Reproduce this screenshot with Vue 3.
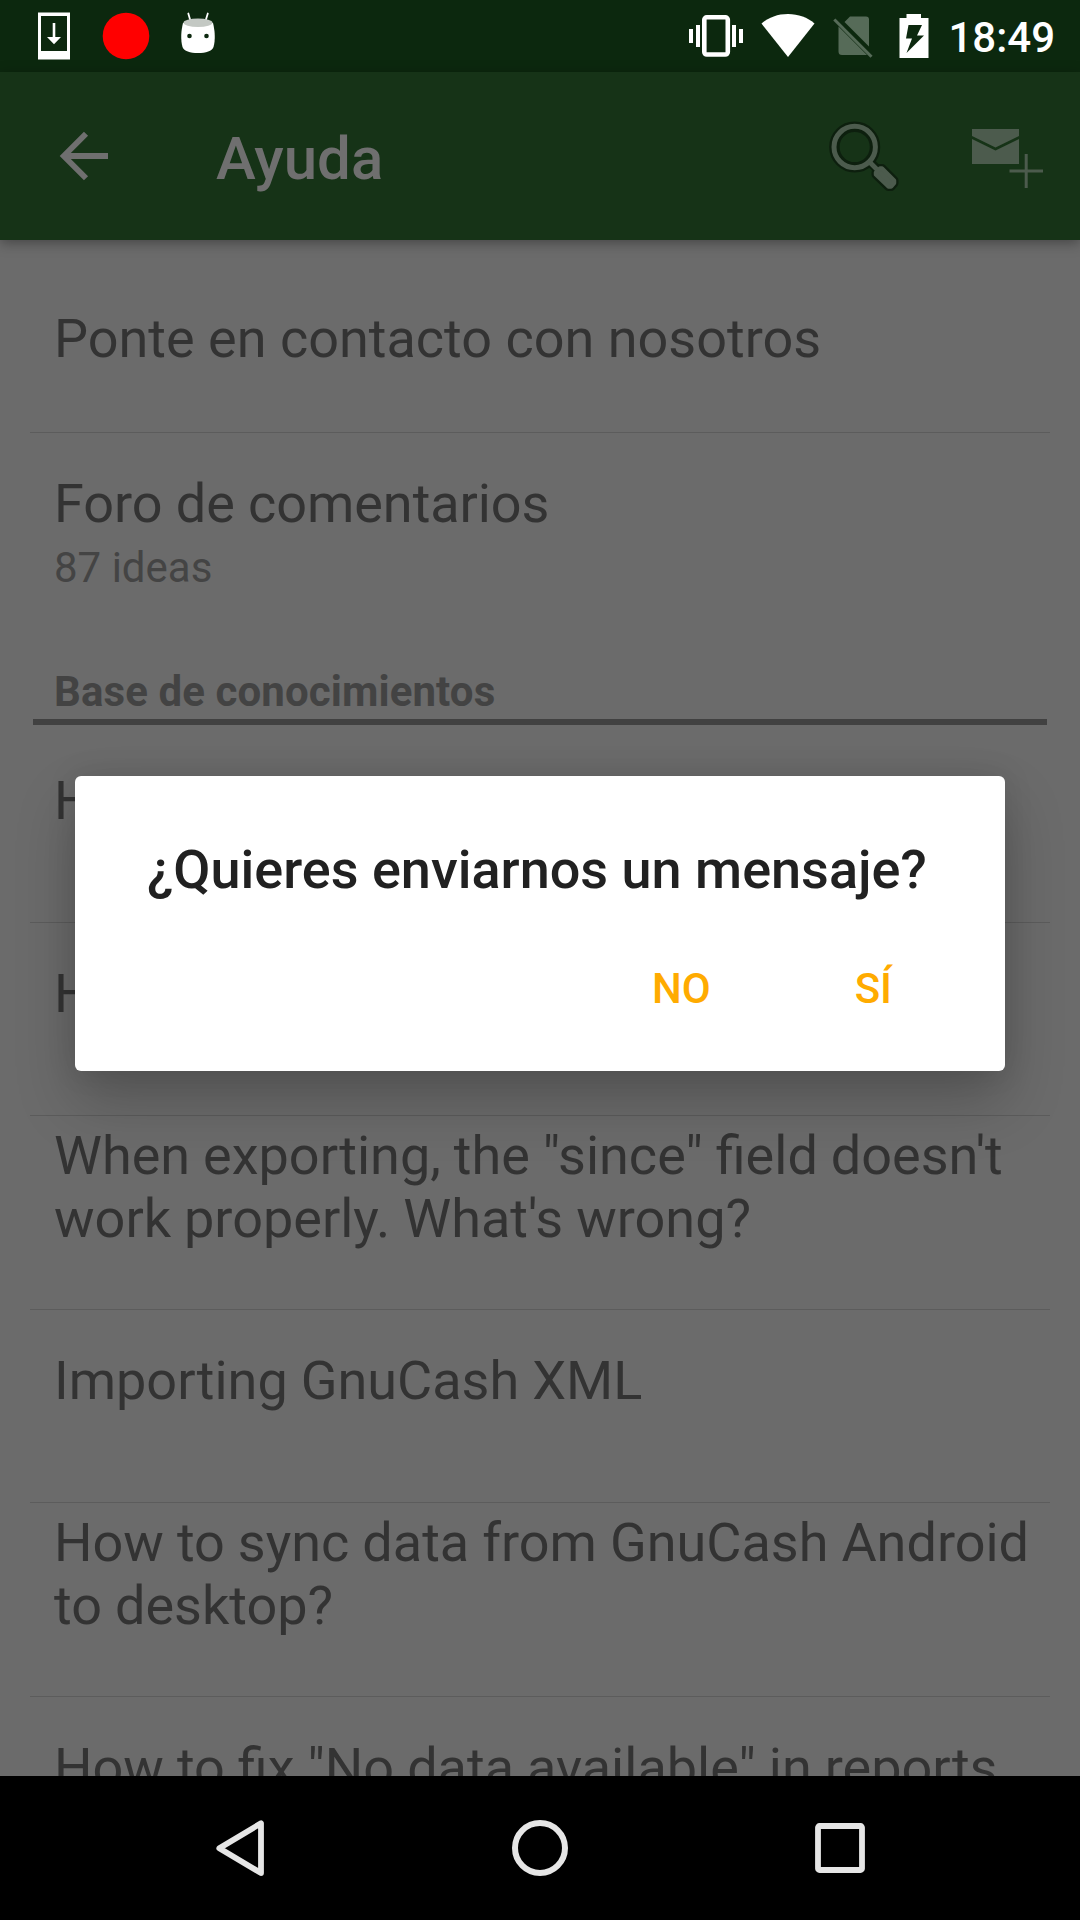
<script setup>
const articles = [
  { text: 'How do I use GnuCash?', height: 194 },
  { text: 'How do I create accounts?', height: 193 },
  { text: 'When exporting, the "since" field doesn\'t work properly. What\'s wrong?', height: 194 },
  { text: 'Importing GnuCash XML', height: 193 },
  { text: 'How to sync data from GnuCash Android to desktop?', height: 194 },
  { text: 'How to fix "No data available" in reports', height: 194 },
]
</script>

<template>
  <div class="screen">
    <div class="status">
      <svg class="s-download" width="34" height="48" viewBox="37 12 34 48">
        <path fill="#fff" fill-rule="evenodd" d="M38 12.5H70V59.5H38ZM41 16V51H67V16Z" />
        <path fill="#fff" d="M52.7 23H55.3V37H61L54 44.3L47 37H52.7Z" />
      </svg>
      <svg class="s-record" width="48" height="48" viewBox="102 12 48 48"><circle cx="126" cy="36" r="23.3" fill="#f00" /></svg>
      <svg class="s-robot" width="36" height="42" viewBox="180 12 36 42">
        <path d="M188.3 13.5L190.5 21M207.8 13.5L205.5 21" stroke="#fff" stroke-width="1.8" stroke-linecap="round" />
        <path d="M183 23C181 31 180.500 40 182.500 47C184 51 190 53 198 53C206 53 212 51 213.500 47C215.500 40 215 31 213 23Z" fill="#fff" />
        <ellipse cx="198" cy="22.700" rx="14.600" ry="4.200" fill="#c3c8c3" />
        <circle cx="189.500" cy="36" r="2.300" fill="#0c280e" /><circle cx="206.500" cy="36" r="2.300" fill="#0c280e" />
      </svg>
      <div class="status-right">
        <svg class="s-vibrate" width="56" height="44" viewBox="688 14 56 44">
          <rect x="704.3" y="17.300" width="23.500" height="37.200" rx="2.500" fill="none" stroke="#fff" stroke-width="4.600" />
          <path fill="#fff" d="M689 29H693V43H689ZM696 25H700V47H696ZM732 25H736V47H732ZM739 29H743V43H739Z" />
        </svg>
        <svg class="s-wifi" width="54" height="44" viewBox="760.500 14 54 44"><path fill="#fff" d="M787.500 57L761 23.500C768 17.500 777 14 787.500 14S807 17.500 814 23.500Z" /></svg>
        <svg class="s-sim" width="40" height="44" viewBox="832 15 40 44">
          <path fill="#566b58" d="M849 16.500H865Q868 16.500 868 19.500V46.500L843.500 22ZM837.500 26.500L866 55H841Q837.500 55 837.500 51.500Z" />
          <path d="M833.300 19.500L870.500 56.700" stroke="#566b58" stroke-width="3" />
        </svg>
        <svg class="s-battery" width="30" height="44" viewBox="898.500 14 30 44">
          <path fill="#fff" fill-rule="evenodd" d="M906 14H920.500V18H928V58H899V18H906ZM908 25L905.500 38.500H911.500L906 53L923.500 35.500H916.500L921.500 25Z" />
        </svg>
        <span class="time">18:49</span>
      </div>
    </div>

    <div class="toolbar">
      <svg class="t-back" width="50" height="50" viewBox="59 131 50 50"><path d="M108 156H64M86 133.700L63.800 156L86 178.300" fill="none" stroke="#6f6f6f" stroke-width="5.800" /></svg>
      <span class="title">Ayuda</span>
      <svg class="t-search" width="76" height="76" viewBox="826 118 76 76">
        <circle cx="854.700" cy="147" r="20.300" fill="none" stroke="#0d1f0e" stroke-width="10.500" />
        <path d="M870 162L879 171" stroke="#0d1f0e" stroke-width="9" />
        <path d="M880 168.500H882L894 180.500V183L891 186.500H888.500L876 174.500V172.500Z" fill="#0d1f0e" stroke="#0d1f0e" stroke-width="9" stroke-linejoin="round" />
        <circle cx="854.700" cy="147" r="20.700" fill="none" stroke="#4c5b4d" stroke-width="5" />
        <path d="M869 161.500L879 171.500" stroke="#4c5b4d" stroke-width="4.800" />
        <path d="M880 168.500H882L894 180.500V183L891 186.500H888.500L876 174.500V172.500Z" fill="#4c5b4d" stroke="#4c5b4d" stroke-width="4.500" stroke-linejoin="round" />
      </svg>
      <svg class="t-mail" width="74" height="62" viewBox="970 127 74 62">
        <path fill="#4c5b4d" d="M972 129H1019V136L995.500 147.500L972 136ZM972 139L995.500 150.500L1019 139V164H972Z" />
        <path d="M1009.500 171H1043M1026.200 154V188" stroke="#4c5b4d" stroke-width="3" />
      </svg>
    </div>

    <div class="content">
      <div class="row contact"><div class="label">Ponte en contacto con nosotros</div></div>
      <div class="forum">
        <div class="label forum-title">Foro de comentarios</div>
        <div class="sub">87 ideas</div>
      </div>
      <div class="section">Base de conocimientos</div>
      <div v-for="a in articles" :key="a.text" class="row article" :style="{ height: a.height + 'px' }">
        <div class="box"><div class="label">{{ a.text }}</div></div>
      </div>
    </div>

    <div class="nav">
      <svg class="n-back" width="48" height="60" viewBox="216 1818 48 60"><path d="M261 1823.300V1873L219.300 1848.200Z" fill="none" stroke="#e6e6e6" stroke-width="5.800" stroke-linejoin="round" /></svg>
      <svg class="n-home" width="60" height="60" viewBox="510 1818 60 60"><circle cx="540" cy="1848" r="25" fill="none" stroke="#e6e6e6" stroke-width="6" /></svg>
      <svg width="52" height="52" viewBox="814 1822 52 52"><rect x="818" y="1826" width="44" height="44" rx="1.500" fill="none" stroke="#e6e6e6" stroke-width="5.800" /></svg>
    </div>

    <div class="dialog">
      <div class="question">¿Quieres enviarnos un mensaje?</div>
      <div class="actions"><span class="no">NO</span><span class="yes">SÍ</span></div>
    </div>
  </div>
</template>

<style>
body { margin: 0; }
</style>

<style scoped>
.screen {
  position: relative;
  width: 1080px;
  height: 1920px;
  overflow: hidden;
  display: flex;
  flex-direction: column;
  background: #6b6b6b;
  font-family: Roboto, sans-serif;
}
svg { display: block; flex: none; }
.status { height: 72px; flex: none; background: #0c280e; display: flex; box-sizing: border-box; padding: 12px 25px 0 37px; }
.s-record { margin-left: 31px; }
.s-robot { margin-left: 30px; }
.status-right { margin-left: auto; display: flex; align-items: flex-start; }
.s-vibrate, .s-wifi, .s-battery { margin-top: 2px; }
.s-wifi { margin-left: 16.5px; }
.s-sim { margin-left: 18px; margin-top: 3px; }
.s-battery { margin-left: 26px; }
.time { color: #fff; font-size: 42px; line-height: 50px; font-weight: 500; margin: 1px 0 0 19.5px; }
.toolbar {
  height: 168px;
  flex: none;
  position: relative;
  background: #163317;
  box-shadow: 0 3px 12px rgba(0, 0, 0, 0.35);
  display: flex;
  align-items: flex-start;
  box-sizing: border-box;
  padding: 46px 36px 0 59px;
}
.t-back { margin-top: 13px; }
.title { margin-left: 107px; margin-top: 6px; font-size: 60px; line-height: 70px; font-weight: 500; color: #6f6f6f; }
.t-search { margin-left: auto; }
.t-mail { margin-left: 68px; margin-top: 9px; }
.content { flex: 1; min-height: 0; overflow: hidden; padding: 0 30px; }
.label { font-size: 54px; line-height: 63px; color: #333; }
.row { box-sizing: border-box; border-bottom: 1px solid #5c5c5c; padding: 0 15px 0 24px; }
.article { word-spacing: -0.4px; }
.contact { height: 193px; padding-top: 67px; }
.box { height: 141px; display: flex; flex-direction: column; justify-content: center; }
.forum { height: 233px; box-sizing: border-box; padding: 39px 24px 0; }
.forum-title { letter-spacing: -0.06px; }
.sub { margin-top: 8px; font-size: 42px; line-height: 50px; color: #444; }
.section {
  height: 59px;
  margin: 0 3px 4px;
  padding: 1px 0 0 21px;
  box-sizing: border-box;
  border-bottom: 6px solid #414141;
  font-size: 42px;
  line-height: 50px;
  font-weight: 700;
  letter-spacing: 0.1px;
  color: #434343;
}
.section + .article { padding-top: 1px; }
.nav {
  height: 144px;
  flex: none;
  background: #000;
  display: flex;
  align-items: center;
  justify-content: space-between;
  padding: 0 214px 0 216px;
}
.n-home { margin-left: 2px; }
.dialog {
  position: absolute;
  left: 75px;
  top: 776px;
  width: 930px;
  height: 295px;
  box-sizing: border-box;
  padding: 62px 72px 0;
  border-radius: 6px;
  background: #fff;
  box-shadow: 0 30px 60px rgba(0, 0, 0, 0.22), 0 0 30px rgba(0, 0, 0, 0.1);
}
.question { font-size: 54px; line-height: 63px; font-weight: 500; color: #212121; white-space: nowrap; }
.actions { display: flex; justify-content: flex-end; gap: 144px; margin-top: 63px; padding-right: 41px; font-size: 42px; line-height: 50px; font-weight: 500; color: #ffab00; }
</style>
